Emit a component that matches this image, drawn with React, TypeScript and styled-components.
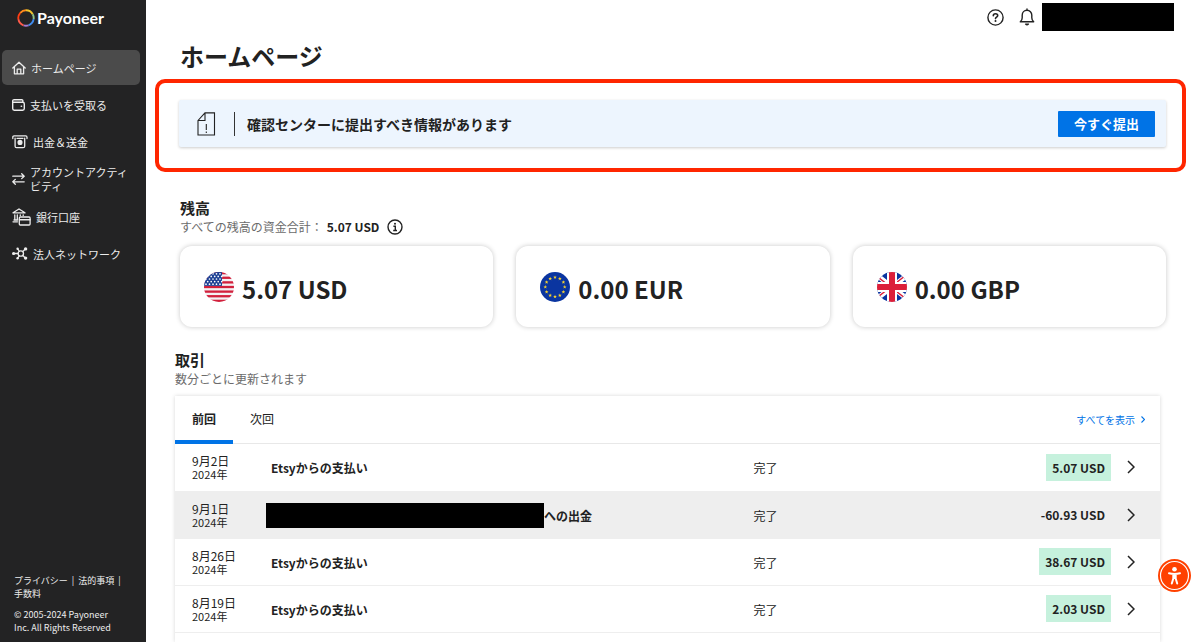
import React from "react";
import styled, { createGlobalStyle } from "styled-components";

const GlobalStyle = createGlobalStyle`
  *, *::before, *::after { box-sizing: border-box; }
  body {
    margin: 0;
    background: #fff;
    color: #222;
    font-family: "Noto Sans CJK JP", "Noto Sans", sans-serif;
    font-size: 12px;
    line-height: 16px;
  }
  h1, h2, p { margin: 0; }
  a { color: inherit; text-decoration: none; }
  button { font: inherit; color: inherit; border: 0; background: none; padding: 0; cursor: pointer; }
  svg { display: block; flex: none; }
`;

const Page = styled.div`
  display: grid;
  grid-template-columns: 146px minmax(0, 1fr);
  min-height: 100vh;
`;

/* Sidebar */

const Sidebar = styled.aside`
  position: sticky;
  top: 0;
  height: 100vh;
  display: flex;
  flex-direction: column;
  justify-content: space-between;
  background: #232324;
  color: #ececec;
`;

const Brand = styled.a`
  display: flex;
  align-items: center;
  gap: 2px;
  height: 36px;
  padding-left: 17px;
  color: #fff;
  font-family: Lato, sans-serif;
  font-size: 16px;
  font-weight: 700;
`;

const NavList = styled.ul`
  list-style: none;
  margin: 14px 6px 0 2px;
  padding: 0;
  display: flex;
  flex-direction: column;
  gap: 2px;
`;

const NavLink = styled.a<{ $active?: boolean }>`
  display: flex;
  align-items: center;
  gap: 5px;
  min-height: 35px;
  padding: 4px 10px;
  border-radius: 5px;
  background: ${(p) => (p.$active ? "#4b4b4b" : "transparent")};
  font-size: 11px;
  line-height: 14px;
`;

const SideFooter = styled.footer`
  display: flex;
  flex-direction: column;
  gap: 8px;
  padding: 0 22px 8px 14px;
  font-size: 9px;
  line-height: 13px;
`;

const LegalLinks = styled.div`
  display: flex;
  flex-wrap: wrap;
  column-gap: 4px;
`;

/* Main column */

const Main = styled.main`
  display: flex;
  flex-direction: column;
  min-width: 0;
`;

const TopBar = styled.header`
  display: flex;
  align-items: center;
  justify-content: flex-end;
  height: 34px;
  padding-right: 26px;
`;

const IconButton = styled.button`
  display: grid;
  place-items: center;
  width: 31px;
  height: 28px;
`;

const AccountName = styled.div`
  width: 132px;
  height: 28px;
  background: #000;
`;

const PageTitle = styled.h1`
  padding: 6px 34px 7px;
  font-size: 24px;
  line-height: 32px;
  font-weight: 700;
`;

const Highlight = styled.section`
  margin: 0 14px 0 9px;
  padding: 17px 16px 21px 20px;
  border: 4px solid #ff2600;
  border-radius: 10px;
`;

const Banner = styled.div`
  display: flex;
  align-items: center;
  height: 47px;
  padding: 0 11px 0 18px;
  background: #edf5fe;
  border-radius: 2px;
  box-shadow: 0 1px 3px rgba(0, 0, 0, 0.2);
`;

const BannerText = styled.p`
  flex: 1;
  margin-left: 18px;
  padding-left: 12px;
  border-left: 1px solid #333;
  font-size: 14px;
  line-height: 24px;
  font-weight: 700;
`;

const PrimaryButton = styled.button`
  width: 97px;
  height: 26px;
  border-radius: 1px;
  background: #0073e6;
  color: #fff;
  font-size: 13px;
  font-weight: 700;
`;

const Section = styled.section<{ $left: number; $right: number }>`
  padding: 0 ${(p) => p.$right}px 0 ${(p) => p.$left}px;
`;

const Balances = styled(Section)`
  margin-top: 26px;
`;

const Transactions = styled(Section)`
  display: flex;
  flex-direction: column;
  flex: 1;
  margin-top: 23px;
`;

const SectionTitle = styled.h2`
  font-size: 15px;
  line-height: 20px;
  font-weight: 700;
`;

const Subtitle = styled.div`
  display: flex;
  align-items: center;
  height: 18px;
  color: #6b6b6b;
  strong { color: #222; margin: 0 8px 0 4px; }
`;

const CardGrid = styled.div`
  display: grid;
  grid-template-columns: repeat(3, minmax(0, 1fr));
  gap: 23px;
  margin-top: 10px;
`;

const BalanceCard = styled.article`
  display: flex;
  align-items: center;
  gap: 8px;
  height: 81px;
  padding: 0 24px;
  border-radius: 12px;
  background: #fff;
  box-shadow: 0 0 5px rgba(0, 0, 0, 0.22);
  font-size: 24px;
  line-height: 30px;
  font-weight: 700;
  span { padding-top: 4px; }
`;

const Panel = styled.div`
  flex: 1;
  margin-top: 8px;
  background: #fff;
  box-shadow: 0 0 4px rgba(0, 0, 0, 0.16);
`;

const PanelHead = styled.div`
  display: flex;
  align-items: center;
  justify-content: space-between;
  height: 48px;
  padding-right: 15px;
  border-bottom: 1px solid #e8e8e8;
`;

const Tabs = styled.div`
  display: flex;
  height: 48px;
`;

const Tab = styled.button<{ $active?: boolean }>`
  width: 58px;
  padding-top: 2px;
  border-bottom: 4px solid ${(p) => (p.$active ? "#0073e6" : "transparent")};
  font-weight: ${(p) => (p.$active ? 700 : 400)};
`;

const AllLink = styled.a`
  display: flex;
  align-items: center;
  gap: 6px;
  color: #0073e6;
  font-size: 10px;
`;

const Table = styled.table`
  width: 100%;
  table-layout: fixed;
  border-collapse: collapse;
`;

const Row = styled.tr<{ $shaded?: boolean }>`
  height: 47px;
  background: ${(p) => (p.$shaded ? "#eee" : "transparent")};
  border-bottom: 1px solid #eee;
`;

const Cell = styled.td`
  padding: 2px 0 0;
`;

const DateCell = styled.td`
  padding: 0 0 0 17px;
  line-height: 14px;
  small { display: block; font-size: 11px; line-height: 12px; }
`;

const NameCell = styled.th`
  padding: 2px 0 0;
  text-align: left;
  font-weight: 700;
`;

const Name = styled.div<{ $inset: number }>`
  display: flex;
  align-items: center;
  padding-left: ${(p) => p.$inset}px;
`;

const HiddenName = styled.span`
  width: 278px;
  height: 25px;
  background: #000;
`;

const AmountCell = styled.td`
  padding: 0;
  text-align: right;
`;

const Amount = styled.span<{ $incoming: boolean }>`
  display: inline-block;
  padding: 1px 6px 0;
  background: ${(p) => (p.$incoming ? "#c6f1dd" : "transparent")};
  line-height: 26px;
  font-weight: 700;
`;

const OpenCell = styled.td`
  padding: 0 0 0 16px;
`;

const OpenLink = styled.a`
  display: block;
`;

const AccessButton = styled.button`
  position: fixed;
  right: 9px;
  bottom: 50px;
  width: 33px;
  height: 33px;
`;

/* Icons */

const line = {
  fill: "none",
  stroke: "currentColor",
  strokeLinecap: "round" as const,
  strokeLinejoin: "round" as const,
};

const LogoRing = () => (
  <svg width="18" height="18" viewBox="0 0 18 18" fill="none" strokeWidth="1.9" aria-hidden="true">
    <path d="M9 1.3A7.7 7.7 0 0 1 15.7 5.2" stroke="#f0c52c" />
    <path d="M15.7 5.2A7.7 7.7 0 0 1 16.6 10.2" stroke="#8cc38a" />
    <path d="M16.6 10.2A7.7 7.7 0 0 1 11.5 16.3" stroke="#3f8cf0" />
    <path d="M11.5 16.3A7.7 7.7 0 0 1 6.5 16.3" stroke="#a77bd0" />
    <path d="M6.5 16.3A7.7 7.7 0 0 1 1.4 10.2" stroke="#ff5a4a" />
    <path d="M1.4 10.2A7.7 7.7 0 0 1 3.3 3.8" stroke="#ff3d12" />
    <path d="M3.3 3.8A7.7 7.7 0 0 1 9 1.3" stroke="#ff8a1c" />
  </svg>
);

const HomeIcon = () => (
  <svg width="14" height="14" viewBox="0 0 14 14" {...line} strokeWidth="1.3" aria-hidden="true">
    <path d="M.8 7 7 1.2 13.2 7M2.4 6v6.8h9.2V6M5.2 12.8V8.2h3.6v4.6" />
  </svg>
);

const WalletIcon = () => (
  <svg width="13" height="12" viewBox="0 0 13 12" {...line} strokeWidth="1.4" aria-hidden="true">
    <path d="M10.8 3V1.6c0-.5-.4-.9-.9-.9H2.2C1.3.7.7 1.3.7 2.1v7.5c0 .9.7 1.6 1.6 1.6h8.4c.9 0 1.6-.7 1.6-1.6V4.9c0-.9-.7-1.6-1.6-1.6H1.8" />
    <path d="M9.3 7.3h.2" strokeWidth="1.6" />
  </svg>
);

const CashIcon = () => (
  <svg width="16" height="14" viewBox="0 0 16 14" {...line} strokeWidth="1.3" aria-hidden="true">
    <path d="M.8 3.5V2.2C.8 1.4 1.3.9 2.1.9h11.600c.8 0 1.300.5 1.300 1.300v1.300M3.100 3.200v8c0 .9.600 1.500 1.500 1.500h6.600c.9 0 1.500-.6 1.500-1.500v-8M5 3.300h6" />
    <circle cx="8" cy="7.4" r="1.9" fill="currentColor" />
  </svg>
);

const SwapIcon = () => (
  <svg width="13" height="12" viewBox="0 0 13 12" {...line} strokeWidth="1.3" aria-hidden="true">
    <path d="M.8 3.2h11.2M9.7.8 12.2 3.2 9.7 5.6M12.2 8.8H1M3.3 6.4.8 8.8l2.5 2.4" />
  </svg>
);

const BankIcon = () => (
  <svg width="19" height="18" viewBox="0 0 19 18" {...line} strokeWidth="1.3" aria-hidden="true">
    <path d="M1 4.8 7 1l6 3.8zM2.800 6.800v5M5.300 6.800v5M8.300 6.800v.8M11.200 6.800v.8M1 13.800h4.500M2 12h3.500" />
    <rect x="7.3" y="9" width="10.8" height="8" rx="1" />
    <path d="M7.5 11.7h10.500" strokeWidth="1.5" />
  </svg>
);

const NetworkIcon = () => (
  <svg width="16" height="13" viewBox="0 0 16 13" {...line} strokeWidth="1.3" aria-hidden="true">
    <circle cx="8.8" cy="6.5" r="2.7" />
    <path d="M1.5 6.5h4.6M10.8 4.6l2.2-2.3M10.8 8.4l2.2 2.3M7.3 4.3 5.9 2.2M7.3 8.7 5.9 10.8" />
    <g fill="currentColor" stroke="none">
      <circle cx="1.6" cy="6.5" r="1.6" />
      <circle cx="13.6" cy="1.9" r="1.7" />
      <circle cx="13.6" cy="11.1" r="1.7" />
      <circle cx="5.6" cy="1.8" r="1.2" />
      <circle cx="5.6" cy="11.2" r="1.2" />
    </g>
  </svg>
);

const HelpIcon = () => (
  <svg width="17" height="17" viewBox="0 0 17 17" {...line} strokeWidth="1.4" aria-hidden="true">
    <circle cx="8.5" cy="8.5" r="7.6" />
    <path d="M6.3 6.7c0-1.2 1-2 2.2-2s2.2.8 2.2 1.9c0 1.5-2.2 1.6-2.2 3" strokeWidth="1.6" />
    <circle cx="8.5" cy="12.1" r="1" fill="currentColor" stroke="none" />
  </svg>
);

const BellIcon = () => (
  <svg width="16" height="18" viewBox="0 0 16 18" {...line} strokeWidth="1.4" aria-hidden="true">
    <path d="M8 1v1.2M1.3 13.8h13.4c-1.3-1-1.9-2.2-1.9-4V7.3C12.8 4.4 10.8 2.3 8 2.3S3.2 4.4 3.2 7.3v2.5c0 1.8-.6 3-1.9 4z" />
    <path d="M6.6 16.1c.8.8 2 .8 2.8 0z" fill="currentColor" />
  </svg>
);

const DocumentIcon = () => (
  <svg width="19" height="24" viewBox="0 0 19 24" fill="none" stroke="#222" strokeWidth="1.1" aria-hidden="true">
    <path d="M1 8.5 8 .9h9.500V23H1zM1 8.500h7V.9M9.300 12v6M9.300 19.500V21" />
  </svg>
);

const InfoIcon = () => (
  <svg width="16" height="16" viewBox="0 0 16 16" fill="none" stroke="#222" strokeWidth="1.4" aria-hidden="true">
    <circle cx="8" cy="8" r="7" />
    <path d="M6.4 7.2H8.3v4.3M6.2 11.5h3.8" />
    <circle cx="8" cy="4.7" r="1" fill="#222" stroke="none" />
  </svg>
);

const Chevron = ({ small = false }: { small?: boolean }) => (
  <svg
    width={small ? 4 : 8}
    height={small ? 7 : 14}
    viewBox="0 0 8 14"
    fill="none"
    stroke="currentColor"
    strokeWidth={small ? 2.2 : 1.5}
    aria-hidden="true"
  >
    <path d="M1 1l6 6-6 6" />
  </svg>
);

const UsFlag = () => (
  <svg width="30" height="30" viewBox="0 0 30 30" role="img" aria-label="USD">
    <clipPath id="us"><circle cx="15" cy="15" r="15" /></clipPath>
    <g clipPath="url(#us)">
      <rect width="30" height="30" fill="#f4f1f3" />
      {[0, 1, 2, 3, 4, 5, 6].map((i) => (
        <rect key={i} y={(i * 60) / 13} width="30" height={30 / 13} fill="#d2203c" />
      ))}
      <rect width="18" height="13.85" fill="#1c3f94" />
      {[0, 1, 2, 3, 4].map((r) =>
        [0, 1, 2, 3, 4].map((c) => (
          <circle key={`${r}${c}`} cx={2 + c * 3.5 + (r % 2) * 1.7} cy={1.8 + r * 2.6} r=".85" fill="#fff" />
        ))
      )}
    </g>
  </svg>
);

const EuFlag = () => (
  <svg width="30" height="30" viewBox="0 0 30 30" role="img" aria-label="EUR">
    <circle cx="15" cy="15" r="15" fill="#0a35a0" />
    {Array.from({ length: 12 }, (_, i) => (
      <path
        key={i}
        d="M0-1.9.5-.6 1.8-.6.8.3 1.2 1.6 0 .8-1.2 1.6-.8.3-1.8-.6-.5-.6z"
        transform={`translate(${15 + 9.7 * Math.sin((i * Math.PI) / 6)} ${15 - 9.7 * Math.cos((i * Math.PI) / 6)})`}
        fill="#f5d130"
      />
    ))}
  </svg>
);

const UkFlag = () => (
  <svg width="30" height="30" viewBox="0 0 30 30" role="img" aria-label="GBP">
    <clipPath id="uk"><circle cx="15" cy="15" r="15" /></clipPath>
    <g clipPath="url(#uk)" fill="none">
      <rect width="30" height="30" fill="#0a35a0" />
      <path d="M-3 1 33 29M33 1-3 29" stroke="#fff" strokeWidth="5" />
      <path d="M-3 2 15 16M33 0 15 14M-3 28 15 14M33 30 15 16" stroke="#dc1f3a" strokeWidth="1.5" />
      <path d="M15 0v30M0 15h30" stroke="#fff" strokeWidth="10" />
      <path d="M15 0v30M0 15h30" stroke="#dc1f3a" strokeWidth="6" />
    </g>
  </svg>
);

const AccessIcon = () => (
  <svg width="33" height="33" viewBox="0 0 33 33" aria-hidden="true">
    <circle cx="16.5" cy="16.5" r="16.5" fill="#ff4100" />
    <circle cx="16.5" cy="16.5" r="14" fill="none" stroke="#fff" strokeWidth="1.2" />
    <circle cx="16.5" cy="10.3" r="2.3" fill="#fff" />
    <path
      d="M11 14.3c3.6.9 7.4.9 11 0M16.5 15.5v3.5M15.3 15.2v4.3l-1.5 5M17.7 15.2v4.3l1.5 5"
      fill="none"
      stroke="#fff"
      strokeWidth="2"
      strokeLinecap="round"
      strokeLinejoin="round"
    />
  </svg>
);

/* Data */

const navItems = [
  { label: "ホームページ", icon: <HomeIcon />, active: true },
  { label: "支払いを受取る", icon: <WalletIcon /> },
  { label: "出金＆送金", icon: <CashIcon /> },
  { label: "アカウントアクティビティ", icon: <SwapIcon /> },
  { label: "銀行口座", icon: <BankIcon /> },
  { label: "法人ネットワーク", icon: <NetworkIcon /> },
];

const balances = [
  { text: "5.07 USD", flag: <UsFlag /> },
  { text: "0.00 EUR", flag: <EuFlag /> },
  { text: "0.00 GBP", flag: <UkFlag /> },
];

const payments = [
  { day: "9月2日", name: "Etsyからの支払い", amount: "5.07 USD" },
  { day: "9月1日", name: "への出金", amount: "-60.93 USD", outgoing: true },
  { day: "8月26日", name: "Etsyからの支払い", amount: "38.67 USD" },
  { day: "8月19日", name: "Etsyからの支払い", amount: "2.03 USD" },
];

export default function App() {
  return (
    <>
      <GlobalStyle />
      <Page lang="ja">
        <Sidebar>
          <div>
            <Brand href="#">
              <LogoRing />
              Payoneer
            </Brand>
            <nav>
              <NavList>
                {navItems.map((item) => (
                  <li key={item.label}>
                    <NavLink href="#" $active={item.active}>
                      {item.icon}
                      <span>{item.label}</span>
                    </NavLink>
                  </li>
                ))}
              </NavList>
            </nav>
          </div>
          <SideFooter>
            <LegalLinks>
              <a href="#">プライバシー</a>
              <span>|</span>
              <a href="#">法的事項</a>
              <span>|</span>
              <a href="#">手数料</a>
            </LegalLinks>
            <p>© 2005-2024 Payoneer Inc. All Rights Reserved</p>
          </SideFooter>
        </Sidebar>

        <Main>
          <TopBar>
            <IconButton aria-label="ヘルプ"><HelpIcon /></IconButton>
            <IconButton aria-label="通知"><BellIcon /></IconButton>
            <AccountName />
          </TopBar>

          <PageTitle>ホームページ</PageTitle>

          <Highlight>
            <Banner>
              <DocumentIcon />
              <BannerText>確認センターに提出すべき情報があります</BannerText>
              <PrimaryButton>今すぐ提出</PrimaryButton>
            </Banner>
          </Highlight>

          <Balances $left={34} $right={34}>
            <SectionTitle>残高</SectionTitle>
            <Subtitle>
              すべての残高の資金合計：<strong>5.07 USD</strong>
              <InfoIcon />
            </Subtitle>
            <CardGrid>
              {balances.map((b) => (
                <BalanceCard key={b.text}>
                  {b.flag}
                  <span>{b.text}</span>
                </BalanceCard>
              ))}
            </CardGrid>
          </Balances>

          <Transactions $left={29} $right={40}>
            <SectionTitle>取引</SectionTitle>
            <Subtitle>数分ごとに更新されます</Subtitle>
            <Panel>
              <PanelHead>
                <Tabs role="tablist">
                  <Tab role="tab" aria-selected="true" $active>前回</Tab>
                  <Tab role="tab" aria-selected="false">次回</Tab>
                </Tabs>
                <AllLink href="#">
                  すべてを表示
                  <Chevron small />
                </AllLink>
              </PanelHead>
              <Table>
                <colgroup>
                  <col style={{ width: 91 }} />
                  <col style={{ width: "49.5%" }} />
                  <col />
                  <col style={{ width: 110 }} />
                  <col style={{ width: 49 }} />
                </colgroup>
                <tbody>
                  {payments.map((p) => (
                    <Row key={p.day} $shaded={p.outgoing}>
                      <DateCell>
                        {p.day}
                        <small>2024年</small>
                      </DateCell>
                      <NameCell scope="row">
                        <Name $inset={p.outgoing ? 0 : 5}>
                          {p.outgoing && <HiddenName />}
                          {p.name}
                        </Name>
                      </NameCell>
                      <Cell>完了</Cell>
                      <AmountCell>
                        <Amount $incoming={!p.outgoing}>{p.amount}</Amount>
                      </AmountCell>
                      <OpenCell>
                        <OpenLink href="#" aria-label={`${p.day}の詳細`}><Chevron /></OpenLink>
                      </OpenCell>
                    </Row>
                  ))}
                </tbody>
              </Table>
            </Panel>
          </Transactions>
        </Main>
      </Page>
      <AccessButton aria-label="アクセシビリティ"><AccessIcon /></AccessButton>
    </>
  );
}
